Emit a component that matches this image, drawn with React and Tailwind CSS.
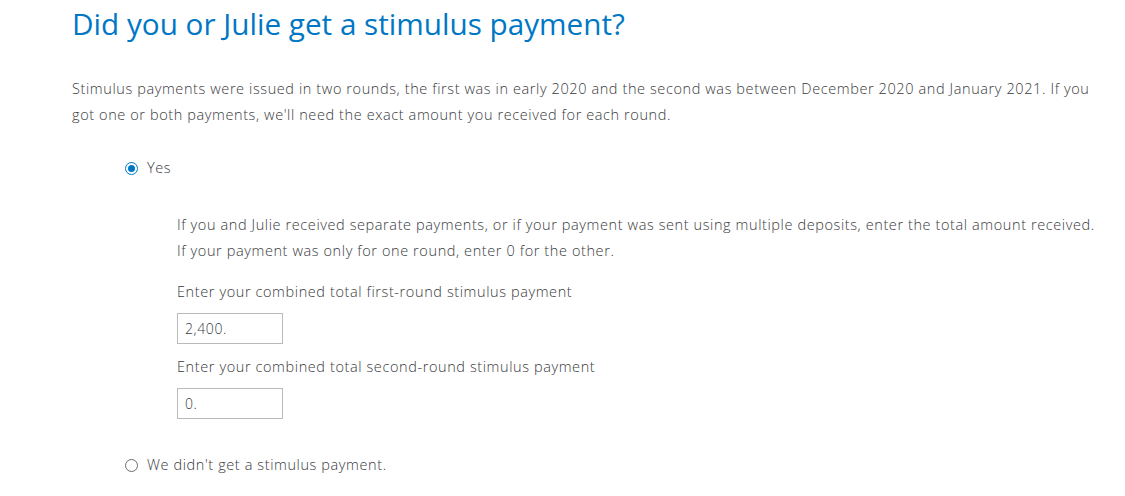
import { useState } from "react";

function Radio({ checked, label, onClick }) {
  return (
    <label className="flex h-[20px] items-center gap-[9px] cursor-pointer" onClick={onClick}>
      <span
        className={`flex h-[13px] w-[13px] items-center justify-center rounded-full border ${
          checked ? "border-[#0077c5]" : "border-[#6b6c72]"
        } bg-white`}
      >
        {checked && <span className="h-[7px] w-[7px] rounded-full bg-[#0077c5]" />}
      </span>
      <span>{label}</span>
    </label>
  );
}

export default function App() {
  const [got, setGot] = useState(true);
  const [first, setFirst] = useState("2,400.");
  const [second, setSecond] = useState("0.");

  return (
    <div
      className="min-h-[496px] bg-white pl-[72px] pr-[20px] text-[14.5px] font-light tracking-[0.6px] text-[#393a3d]"
      style={{ fontFamily: "'Open Sans', 'Liberation Sans', sans-serif" }}
    >
      <h1 className="pt-[4px] text-[29.7px] leading-[40px] tracking-normal text-[#0077c5] font-normal">
        Did you or Julie get a stimulus payment?
      </h1>

      <p className="mt-[32px] w-[1030px] leading-[26px]">
        Stimulus payments were issued in two rounds, the first was in early 2020 and the second was
        between December 2020 and January 2021. If you got one or both payments, we'll need the
        exact amount you received for each round.
      </p>

      {/* Yes option */}
      <div className="mt-[30px] ml-[53px]">
        <Radio checked={got} label="Yes" onClick={() => setGot(true)} />

        <div className="ml-[52px] mt-[34px] w-[928px]">
          <p className="leading-[26px]">
            If you and Julie received separate payments, or if your payment was sent using multiple
            deposits, enter the total amount received. If your payment was only for one round, enter
            0 for the other.
          </p>

          <div className="mt-[18px] leading-[20px]">Enter your combined total first-round stimulus payment</div>
          <input
            value={first}
            onChange={(e) => setFirst(e.target.value)}
            className="mt-[11px] block h-[31px] w-[106px] border border-[#b9babc] px-[7px] text-[14px] text-[#393a3d] outline-none"
          />

          <div className="mt-[13px] leading-[20px]">Enter your combined total second-round stimulus payment</div>
          <input
            value={second}
            onChange={(e) => setSecond(e.target.value)}
            className="mt-[11px] block h-[31px] w-[106px] border border-[#b9babc] px-[7px] text-[14px] text-[#393a3d] outline-none"
          />
        </div>

        <div className="mt-[36px]">
          <Radio checked={!got} label="We didn't get a stimulus payment." onClick={() => setGot(false)} />
        </div>
      </div>
    </div>
  );
}
